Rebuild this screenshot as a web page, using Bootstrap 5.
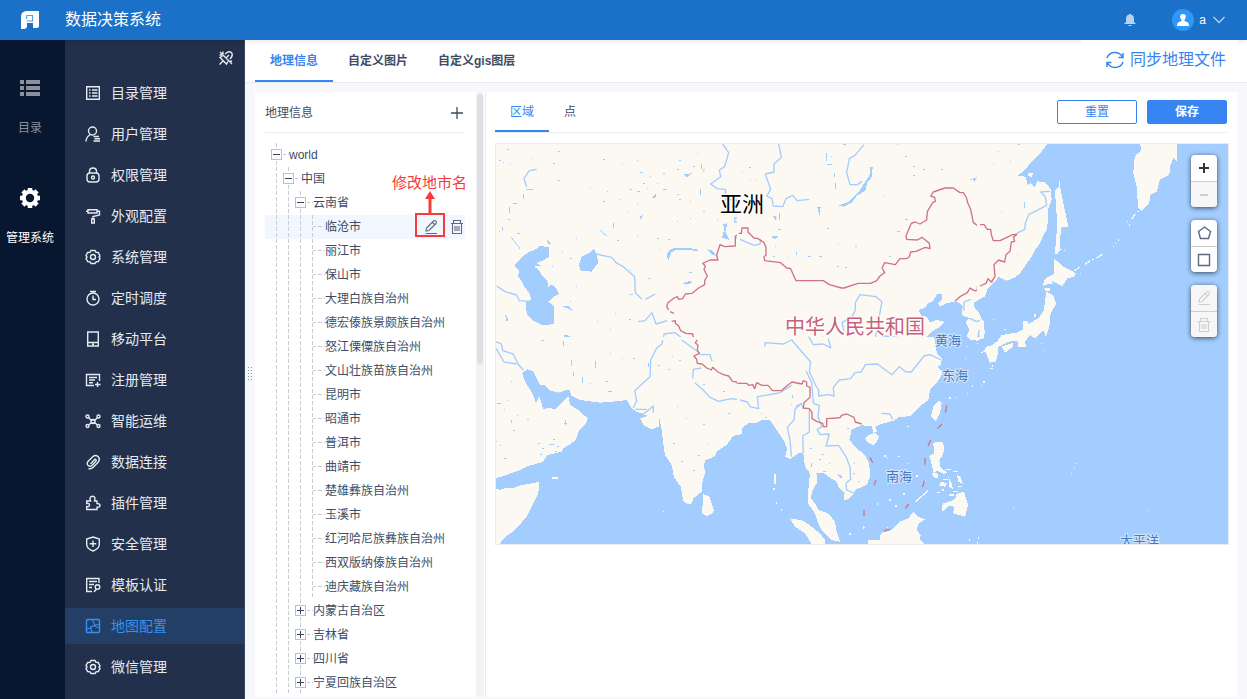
<!DOCTYPE html>
<html lang="zh-CN">
<head>
<meta charset="utf-8">
<meta name="viewport" content="width=device-width, initial-scale=1">
<title>数据决策系统</title>
<link href="https://cdn.jsdelivr.net/npm/bootstrap@5.3.0/dist/css/bootstrap.min.css" rel="stylesheet">
<script src="https://cdn.jsdelivr.net/npm/bootstrap@5.3.0/dist/js/bootstrap.bundle.min.js" defer></script>
<style>
:root { --ink:#3d4d66; --blue:#3685f2; --line:#e8eaed; }
body { font-family:"Liberation Sans","Noto Sans CJK SC",sans-serif; font-size:12px; line-height:18px; color:var(--ink); background:#f7f8fb; }
a { color:inherit; text-decoration:none; }
button { font-family:inherit; }
.icon-btn { border:0; background:none; padding:0; color:inherit; display:flex; align-items:center; justify-content:center; }
svg.ico { width:16px; height:16px; fill:none; stroke:currentColor; stroke-width:1.4; flex:none; display:block; }

.topbar { height:40px; background:#1a71c7; color:#fff; padding:0 22px 0 20px; z-index:1; box-shadow:0 1px 6px rgba(0,0,0,.1); flex:none; }
.topbar h1 { font-size:16px; line-height:24px; font-weight:400; margin:0 0 0 25px; }
.avatar { width:22px; height:22px; border-radius:50%; background:#2f96fa; margin:0 5px 0 36px; }
.user { gap:7px; }

.rail { width:65px; background:#081730; color:#fff; padding:38px 5px 0 0; flex:none; }
.rail a { display:flex; flex-direction:column; align-items:center; gap:21px; margin-bottom:51px; white-space:nowrap; }
.rail .dim { color:#8a909c; }

.side { width:180px; background:#22304c; border-right:1px solid #344663; color:#e6eaf1; flex:none; overflow:hidden; }
.side .pin { width:16px; height:16px; margin:10px 10px 9px auto; }
.side a { height:36px; margin-bottom:5px; padding-left:20px; gap:10px; font-size:14px; line-height:20px; }
.side a.active { background:#233f66; color:#3491f4; }

.tabbar { height:43px; background:#fff; border-bottom:1px solid var(--line); padding-left:10px; flex:none; }
.tab-a { padding:2px 15px 0; display:flex; align-items:center; border-bottom:2px solid transparent; }
.tab-a.active { color:var(--blue); border-color:var(--blue); }
.sync { height:42px; width:157px; margin:-1px 9px 0 auto; background:#fff; color:var(--blue); font-size:16px; gap:5px; position:relative; z-index:2; padding-left:12px; }

.work, .shell { min-height:0; }
.work { padding:9px 10px 2px 0; }
.grip { width:10px; display:flex; align-items:center; justify-content:center; margin-top:-44px; }
.grip svg { width:5px; height:14px; }
.tree-panel { width:231px; background:#fff; border-right:1px solid var(--line); flex:none; }
.tree-body { padding:0 11px 0 10px; min-width:0; overflow:hidden; }
.tree-head { height:41px; border-bottom:1px solid var(--line); margin-bottom:10px; padding:1px 1px 0 0; }
.tree-head svg { width:14px; height:14px; }
.bar-track { width:8px; margin-right:1px; background:#f2f2f2; border-radius:4px; padding:2px 1px; flex:none; }
.bar-thumb { height:45%; background:#dedfe4; border-radius:3px; }

.node { height:24px; padding-left:6px; display:flex; align-items:center; white-space:nowrap; position:relative; }
.node.chosen { background:#f2f7ff; z-index:1; }
.guide { width:12px; height:24px; flex:none; display:flex; align-items:center; padding-bottom:1px;
  background:repeating-linear-gradient(#c9ccd3 0 4px,transparent 4px 6px) 5px 0/1px 100% no-repeat; }
.dash, .guide.leaf::after { content:""; width:6px; height:1px; flex:none; background:repeating-linear-gradient(90deg,#c9ccd3 0 3px,transparent 3px 5px); }
.guide.leaf::after { margin-left:6px; }
.dash { margin-bottom:1px; }
.toggle { width:11px; height:11px; border:1px solid #b9bfcb; background:#fff; color:#33415c; padding:0; display:block; flex:none; }
.toggle svg { width:9px; height:9px; display:block; }
.acts { position:absolute; right:0; top:0; height:24px; gap:10px; color:#5d6a80; }
.acts svg { stroke-width:1.1; }
.callout { position:absolute; right:20px; top:-2px; width:30px; height:24px; border:2px solid #f43c3c; pointer-events:none; }
.callout svg { position:absolute; left:8px; top:-24px; width:10px; height:22px; }
.callout span { position:absolute; right:-24px; top:-42px; font-size:15px; line-height:20px; color:#f43c3c; }

.map-panel { background:#fff; padding:0 8px 0 9px; min-width:0; }
.map-head { height:41px; border-bottom:1px solid var(--line); margin:0 2px 10px 0; }
.map-btns { gap:10px; }
.map-head .btn { --bs-btn-padding-y:0; --bs-btn-padding-x:0; --bs-btn-font-size:12px; --bs-btn-line-height:16px; width:80px; height:24px; border-radius:2px;
  --bs-btn-color:#3685f2; --bs-btn-border-color:#3685f2; }
.map-head .btn-solid { --bs-btn-color:#fff; --bs-btn-bg:#3685f2; }
.map-box { border:1px solid var(--line); position:relative; }
.map-box > svg { display:block; width:100%; height:auto; background:#a3ccff; }
.tools { position:absolute; right:11px; top:11px; display:grid; gap:13px; }
.tool-set { width:26px; border-radius:4px; overflow:hidden; background:#fff; box-shadow:0 1px 5px rgba(0,0,0,.65); color:#5a6980; }
.tool-set button { width:26px; height:26px; }
.tool-set .dark { color:#333; }
.tool-set button + button { border-top:1px solid #ccc; }
.tool-set .off { background:#f6f6f6; color:#ccd0d6; }
.tool-set .off svg { stroke-width:1.1; }
.tool-set .bold { stroke-width:2; }
.land { fill:#fcf9f2; }
.water { fill:#a3ccff; }
.land, .water, .speck, .isle { shape-rendering:crispEdges; }
.river { fill:none; stroke:#a3ccff; stroke-width:4; stroke-linejoin:round; }
.speck { fill:none; stroke:#a3ccff; stroke-width:3; }
.isle { fill:none; stroke:#fcf9f2; stroke-width:4; }
.edge { fill:none; stroke:#cf7487; stroke-width:4; stroke-linejoin:round; }
.bigname { stroke:#fff; stroke-width:2px; paint-order:stroke; }
.seaname { font-size:13px; fill:#4179c4; stroke:#d5e6fb; stroke-width:2px; paint-order:stroke; }
</style>
</head>
<body>
<div class="d-flex flex-column vh-100 overflow-hidden">
  <header class="topbar d-flex align-items-center position-relative">
    <svg width="20" height="20" viewBox="0 0 20 20" aria-label="logo"><path fill="#fff" d="M6 1H19V16Q19 18 17 18H13V13H7V17Q6 19 4 19H1V6Q1 2 6 1Z"/><path d="M6.500 5.500H12.500V11.500M6.500 5.500V9M6.500 11H12.500" fill="none" stroke="#5d9fdf" stroke-width="1.200"/></svg>
    <h1>数据决策系统</h1>
    <button class="icon-btn ms-auto" aria-label="消息"><svg width="12" height="14" viewBox="0 0 12 14" fill="#b5d1ee"><path d="M5 1.500V1H7V1.500C9.500 2 10 4 10 6V9L12 11H0L2 9V6C2 4 2.500 2 5 1.500ZM4 12H8L7 13H5Z"/></svg></button>
    <span class="avatar d-flex align-items-center justify-content-center"><svg width="12" height="12" viewBox="0 0 12 12" fill="#fff"><path d="M6 0C10 0 9 4 7.500 6V7L11 8.500Q12 9 12 12H0Q0 9 1 8.500L4.500 7V6C3 4 2 0 6 0Z"/></svg></span>
    <button class="icon-btn user"><span>a</span><svg width="12" height="8" viewBox="0 0 12 8" fill="none" stroke="#b5d1ee" stroke-width="1.300"><path d="M.5 1L6 6.500L11.500 1"/></svg></button>
  </header>

  <div class="shell d-flex flex-grow-1">
    <nav class="rail">
      <a href="#" class="dim"><svg width="20" height="20" viewBox="0 0 20 20" fill="currentColor"><path d="M0 2h4v4H0zM6 2h14v4H6zM0 8h4v4H0zM6 8h14v4H6zM0 14h4v4H0zM6 14h14v4H6z"/></svg>目录</a>
      <a href="#"><svg width="20" height="20" viewBox="0 0 20 20"><circle cx="10" cy="10" r="6.200" fill="none" stroke="#fff" stroke-width="4"/><g stroke="#fff" stroke-width="4.500"><path d="M10 0V3M10 17V20M0 10H3M17 10H20M2.900 2.900L5 5M15 15L17.100 17.100M17.100 2.900L15 5M5 15L2.900 17.100"/></g></svg>管理系统</a>
    </nav>

    <nav class="side">
      <button class="icon-btn pin" aria-label="取消固定"><svg class="ico" viewBox="0 0 16 16"><path d="M2 2L14 14M7 4L9 2.500Q11 1 13.500 2.500Q15 5 13.500 7L12 9M4.500 6L2 7.500L8.500 14L10 11.500M5 11L1.500 14.500M5 1.500V4M1.500 5H4M11 5L8 8M12 11.500L14 11"/></svg></button>
      <a href="#" class="d-flex align-items-center"><svg class="ico" viewBox="0 0 16 16"><path d="M1.700 1.700H14.300V14.300H1.700ZM4 5H5.500M7 5H12.500M4 8H5.500M7 8H12.500M4 11H5.500M7 11H12.500"/></svg>目录管理</a>
      <a href="#" class="d-flex align-items-center"><svg class="ico" viewBox="0 0 16 16"><circle cx="7.500" cy="5" r="4"/><path d="M5.500 8.500Q1 11 1 15.500M8.500 10.500H14M9.500 12.700H15M8.500 15H15"/></svg>用户管理</a>
      <a href="#" class="d-flex align-items-center"><svg class="ico" viewBox="0 0 16 16"><rect x="2" y="6" width="12" height="9" rx="3"/><path d="M4.500 6V4.500Q4.500 1 8 1T11.500 4.500V6"/><circle cx="8" cy="10.500" r="1.500"/></svg>权限管理</a>
      <a href="#" class="d-flex align-items-center"><svg class="ico" viewBox="0 0 16 16"><path d="M3 1.700H12V5H3ZM1 3.300H3M12 3.300H14.500V7L8 8.500V11M6.700 11H9.300V15H6.700Z"/></svg>外观配置</a>
      <a href="#" class="d-flex align-items-center"><svg class="ico" viewBox="0 0 16 16"><path id="cog" d="M6 1.500H10L11 3.300L13.300 3.500L15 7L14 8L15 9.500L13.300 12.500L11 12.800L10 14.500H6L5 12.800L2.700 12.500L1 9.500L2 8L1 6.500L2.700 3.500L5 3.300Z"/><circle cx="8" cy="8" r="2.500"/></svg>系统管理</a>
      <a href="#" class="d-flex align-items-center"><svg class="ico" viewBox="0 0 16 16"><circle cx="8" cy="9" r="6"/><path d="M5 1.500H11M8 5.500V9.500H11M8 1.500V3"/></svg>定时调度</a>
      <a href="#" class="d-flex align-items-center"><svg class="ico" viewBox="0 0 16 16"><path d="M2.700 1H13.300V15H2.700ZM3 11.500H13M7 13.300H9"/></svg>移动平台</a>
      <a href="#" class="d-flex align-items-center"><svg class="ico" viewBox="0 0 16 16"><path d="M14.500 9V2.500H1.500V13.500H9M4 5.500H12M4 8H10M4 10.700H8M12.500 10V15M10 12.500H15.500"/></svg>注册管理</a>
      <a href="#" class="d-flex align-items-center"><svg class="ico" viewBox="0 0 16 16"><circle cx="2.500" cy="3.500" r="1.500"/><circle cx="13.500" cy="3.500" r="1.500"/><circle cx="2.500" cy="13" r="1.500"/><circle cx="13.500" cy="13" r="1.500"/><circle cx="8" cy="8.500" r="2"/><path d="M3.500 4.500L6 7H10L12.500 4.500M3.500 12L6 10H10L12.500 12"/></svg>智能运维</a>
      <a href="#" class="d-flex align-items-center"><svg class="ico" viewBox="0 0 16 16"><path d="M5.500 10L9.500 5.500Q10.500 5 11 5.700T10.800 7.200L7 11.500Q5 13 3 11.200Q1.500 9.500 3 7.500L8 2.500Q10.500 .5 13 2.500Q15.500 5 13.300 8L8.500 13Q6 15.500 3.500 14.500"/></svg>数据连接</a>
      <a href="#" class="d-flex align-items-center"><svg class="ico" viewBox="0 0 16 16"><path d="M1.700 14.500V11.500Q4.500 12 4.500 10T1.700 8.500V6H5.500Q4 1.300 7.500 1.300T9.500 6H12V8.500Q15 8.500 15 10.500T12 12.300V14.500Z"/></svg>插件管理</a>
      <a href="#" class="d-flex align-items-center"><svg class="ico" viewBox="0 0 16 16"><path d="M8 1L14.300 3V8.500Q14 13 8 15Q2 13 1.700 8.500V3ZM8 4.500V11M4.700 7.700H11.300"/></svg>安全管理</a>
      <a href="#" class="d-flex align-items-center"><svg class="ico" viewBox="0 0 16 16"><path d="M14 6V1.500H1.700V14.500H7M4 4.500H12M4 7.500H9M4 10.500H7M9 15L11.500 12"/><circle cx="12.500" cy="10" r="2.300"/></svg>模板认证</a>
      <a href="#" class="d-flex align-items-center active"><svg class="ico" viewBox="0 0 16 16"><rect x="1.500" y="1.500" width="13" height="13" rx="1"/><path d="M7.500 1.500L10 7.500L14.500 6M10 7.500L5.500 9V10L1.500 11M5.500 9L7 14.500M10 7.500L11 9L14.500 9.500" stroke-width="1.100"/></svg>地图配置</a>
      <a href="#" class="d-flex align-items-center"><svg class="ico" viewBox="0 0 16 16"><use href="#cog"/><circle cx="8" cy="8" r="2.500"/></svg>微信管理</a>
    </nav>

    <main class="d-flex flex-column flex-grow-1 overflow-hidden">
      <div class="tabbar d-flex fw-bold">
        <a href="#" class="tab-a active">地理信息</a>
        <a href="#" class="tab-a">自定义图片</a>
        <a href="#" class="tab-a">自定义gis图层</a>
        <button class="icon-btn sync"><svg width="20" height="18" viewBox="0 0 20 18" fill="none" stroke="currentColor" stroke-width="1.500"><path d="M2 7Q4 1.500 10 1.500Q15 1.500 17.500 6M18 2V6.500H13.500M18 11Q16 16.500 10 16.500Q5 16.500 2.500 12M2 16V11.500H6.500"/></svg>同步地理文件</button>
      </div>

      <div class="work d-flex flex-grow-1">
        <div class="grip"><svg viewBox="0 0 5 14" fill="#8f99aa"><path d="M0 1h1v1H0zM3 1h1v1H3zM0 4h1v1H0zM3 4h1v1H3zM0 7h1v1H0zM3 7h1v1H3zM0 10h1v1H0zM3 10h1v1H3zM0 13h1v1H0zM3 13h1v1H3z"/></svg></div>
        <section class="tree-panel d-flex">
          <div class="tree-body flex-grow-1">
            <div class="tree-head d-flex align-items-center justify-content-between"><span>地理信息</span><button class="icon-btn" aria-label="添加"><svg viewBox="0 0 14 14" fill="none" stroke="currentColor" stroke-width="1.300"><path d="M7 1V13M1 7H13"/></svg></button></div>
            <div id="tree"></div>
          </div>
          <div class="bar-track"><div class="bar-thumb"></div></div>
        </section>

        <section class="map-panel flex-grow-1">
          <div class="map-head d-flex">
            <a href="#" class="tab-a active">区域</a>
            <a href="#" class="tab-a">点</a>
            <div class="map-btns ms-auto d-flex align-items-center">
              <button class="btn">重置</button>
              <button class="btn btn-solid fw-bold">保存</button>
            </div>
          </div>
          <div class="map-box">
            <svg viewBox="496 144 732 400" role="img" aria-label="亚洲地图">
              <!-- north-west: Caspian, Aral, Kazakhstan -->
              <g transform="translate(490 140) scale(.33333)">
                <path class="land" d="M0 0H790V640H0Z"/>
                <path class="water" d="M178 322L150 318 140 326 122 334 105 343 95 352 82 366 73 378 88 393 84 408 95 425 102 438 115 455 125 478 108 485 110 520 118 532 135 545 160 556 193 552 193 500 175 485 192 470 208 462 195 440 186 434 175 440 172 422 155 405 146 390 133 380 153 377 140 370 165 358 178 350ZM275 350L300 338 312 326 318 340 325 368 305 395 272 392 267 374ZM530 348Q534 326 555 324L620 326 625 332 560 330 545 336 535 360ZM650 328L666 330 680 348 668 344ZM578 430L600 422 606 428 590 434ZM582 102L606 100 590 112ZM700 252L712 250 706 275 718 300 696 292 702 272ZM448 230L460 224 452 238ZM44 520L56 540 50 546ZM222 584L240 588 226 620 224 600ZM485 172L500 158 495 176ZM216 500L235 496 250 514 230 504ZM155 598L164 598 160 606ZM18 590L34 610 36 640H18ZM170 298L186 312 176 314Z"/>
                <path class="river" d="M318 342L365 352 378 368 400 380 434 410 436 458 456 478M20 438L45 455 80 465 88 482 115 484M466 478L496 462M444 545L465 542 486 518 498 552 532 542M498 630L520 608 522 582 555 578 620 628M698 12L716 38 704 80 688 90 692 110 662 132 682 146 706 148 708 178 740 180 742 210M752 230V246H734V234ZM738 292L780 312M140 88L118 92 102 116 110 140"/>
                <path class="speck" d="M108 150h22M100 162v16M82 190h-14M60 200v18M55 240h4M80 280h10M62 290l28 36M28 62h4M38 68h4M60 75h4M125 55h4M205 35h4M190 72h4M340 60h4M440 62h4M450 98h8M520 100h6M635 72v14M640 88h6M610 80h4M420 150h6M440 155h10M470 145h4M500 130h4M520 150h12M560 165h6M568 180h6M600 185h4M632 148v16M600 235h4M560 245h4M638 95h4M205 122h4M300 145h4M350 155h4M340 185h6M440 190h5M410 215h4M370 250v14M330 270l22 20M380 303h6M258 295h4M215 335h4M240 355h6M185 380h4M420 392h4M475 415h6M598 398h8M420 465h10M258 440h4M240 485h4M375 520h4M320 545h4M360 570h4M418 540h5M180 500h6M510 330h4M502 295h6M535 300h4M440 290h5M38 260v14M26 275h5M52 30h4M640 215h4M680 240h4M620 40h4M560 90h6M568 62h4M460 130h4M480 110h4M390 180h4M395 70h4"/>
                <path class="edge" d="M780 280H776V264H756V278L736 288V318L704 320 690 314 680 345 684 360 660 360 638 370 646 378 642 388 652 408 644 422V434L626 444 606 460 586 462 578 476 566 478 562 470 552 474 534 488 530 500 536 510M540 515L552 520M545 544L556 542V550L566 558 572 572 588 580 608 582 612 598 622 604 616 618 622 630"/>
              </g>
              <!-- north-east: Mongolia, Baikal, north China, Korea -->
              <g transform="translate(740 140) scale(.33333)">
                <path class="land" d="M-10 0H790V400L775 412 760 430 742 448 735 470 700 488 705 505 718 520 722 530 730 560 735 575 730 595 712 602 690 600 680 590 688 568 676 545 690 535 665 525 668 500 658 488 640 485 620 490 600 500 595 490 608 478 605 462 590 463 580 482 562 492 558 502 535 510 545 528 560 530 570 548 590 540 615 546 600 560 575 575 560 592 580 610 590 640H-10Z"/>
                <path class="water" d="M392 78L398 82 396 110 382 128 376 152 350 168 335 188 312 200 296 196 325 186 345 166 362 148 372 130 388 108ZM232 202L242 202 238 228ZM98 228L112 230 106 242ZM698 116L710 112 704 126ZM92 290L114 288 106 298Z"/>
                <path class="river" d="M116 12L124 52 102 72V96L76 102 92 148 80 168 96 176 100 198 128 200 138 176 158 166 172 182 208 178M372 14L345 46 328 56 320 98 330 134 352 134 366 124M0 298L42 316 60 312 62 298M405 600L426 485 408 470 360 464 346 488V510L336 530 306 548 312 575M250 590L272 624 250 622 220 602M405 600L434 588 484 594M180 594H150M75 620V608L130 612 155 600 180 630M692 478L672 486V512M690 535L710 545 722 540 724 585 714 590 718 570"/>
                <path class="speck" d="M260 40v24M262 75h14M285 100v12M288 130v16M310 15h8M272 50h5M496 238h8M472 276h8M5 98h4M28 82h4M45 120h4M120 220v20M115 268h8M105 320h4M170 336v8M98 350h8M140 352h4M205 350h8M236 350h10M262 265h4M294 312h4M346 320h4M448 350h4M292 380h4M316 382h4M428 168h4M496 50h4M520 80h4M550 88h5M604 90h4M470 15h5M765 28h4M748 124h4M520 108h4M690 120h5M30 120h4M102 10h4"/>
                <path class="edge" d="M-4 280H4L6 264H24V276L42 294 54 296 72 308 78 322 78 345 72 350 74 362 122 368 140 384 152 386 168 422H250L268 434 304 444 312 444 354 430H392L410 422 420 408 434 398 426 384 434 368 466 374 480 356H500L508 350 512 336 528 334 556 322 570 326 568 310 546 292 532 300 500 298 498 288 514 250 525 246 540 252 560 240 562 215 578 188 586 184 584 172 572 168 580 156 615 144 640 144 660 158 670 158 680 174 682 186 692 208 700 248 712 256H736L752 270 758 302H780L800 294 830 282"/>
                <path class="edge" d="M645 484L660 470 682 458 690 444 702 452 712 452 712 440 730 438 740 428 742 416 756 426 764 410 762 374 776 362 790 368"/>
              </g>
              <!-- Okhotsk, Sakhalin, Kamchatka, Japan -->
              <g transform="translate(980 140) scale(.33333)">
                <path class="land" d="M-10 0H210L200 14 185 35 168 52 150 70 135 90 112 108 138 110 142 135 152 130 165 142 172 124 195 126 213 148 215 180 205 205 204 240 200 270 190 285 180 310 165 330 155 350 140 370 120 400 105 412 80 422 55 410 35 430 20 440 15 470 -10 480ZM145 98L160 98 155 112 142 105ZM238 120L242 150 250 190 258 225 265 262 245 262 240 295 240 325 255 332 240 330 232 343 225 340 228 300 232 250 228 200 225 150 236 140ZM222 355L250 380 288 400 282 410 262 415 247 438 215 422 218 432 195 434 188 440 192 422 205 410 222 402ZM200 455L220 465 228 492 212 520 208 560 198 590 190 572 165 595 150 585 135 605 138 620 115 622 112 602 85 605 65 615 40 630 0 640 50 605 65 585 110 578 130 568 128 542 142 542 145 552 175 535 192 510 195 480ZM192 444H210V452H195ZM480 12H590V65L580 55 570 80 568 105 540 118 530 155 510 165 508 190 485 212 475 205 472 170 470 140 460 100 462 60 468 45 484 30ZM0 530L12 545 12 585 0 590Z"/>
                <path class="isle" d="M455 236l12-14M440 245h3M446 255h3M415 300h3M405 310h3M398 320h3M368 342l-18 12M342 358h-6M330 362l-16 12M300 382l-18 10M300 400h4M38 538h4M72 568h6M184 610h3M165 522v8M472 215h4"/>
                <path class="river" d="M110 280L134 268 136 250 146 224 200 196 196 170 182 156 210 154M120 275L100 285"/>
                <path class="edge" d="M0 254H12L22 268H32L34 284 40 302 60 302 98 284 110 284 100 292 104 304 94 306 90 334 78 344 74 366 56 360 42 374 45 410 34 426 24 416 18 430 0 438"/>
                <path class="speck" d="M38 70h3M90 65h3M62 216h3M135 185v18M115 14h4M112 345h3M55 35h3"/>
              </g>
              <!-- south-west: Persian Gulf, Arabia, India -->
              <g transform="translate(490 340) scale(.33333)">
                <path class="land" d="M0 -10H790V245L775 250 758 262 755 282 730 288 710 315 680 335 675 348 645 362 642 375 645 400 636 430 635 455 610 475 605 490 592 492 580 484 572 440 552 412 545 375 525 345 520 310 515 270 508 235 506 260 485 268 460 255 450 235 475 228 440 215 425 205 410 180 380 184 330 188 270 180 245 168 238 148 205 158 180 152 165 136 150 134 130 95 112 87 97 100 105 125 130 165 138 190 148 168 160 208 175 203 195 208 235 168 240 195 265 210 293 235 288 250 268 270 258 300 235 316 220 325 215 335 170 346 160 365 110 380 90 390 30 412 0 415ZM0 438L30 450 45 444 75 443 90 436 148 426 145 460 125 500 110 530 75 570 45 592 28 612H0ZM640 462L658 470 672 510 668 520 650 528 636 520ZM186 411H203V416H186Z"/>
                <path class="river" d="M18 5L34 12 38 32 70 42 84 72 100 90M18 25L42 66 80 72M518 0L516 12 500 24 482 60 480 110 434 152 440 182 430 204M436 208H470M450 230L475 210 490 198V218M575 0L630 40M614 128L640 150 660 172 686 184 724 176 768 182 780 200M608 116L610 88 634 84M630 44H660L666 64"/>
                <path class="speck" d="M152 2h10M222 4v14M245 60v18M318 64v20M250 95v12M278 112v16M345 126h10M355 155h12M430 55h5M228 240v16M222 250h10M145 312h6M178 314h14M200 320h6M155 325h6M190 300h4M66 240v8M42 210h4M50 182h4M22 192h10M70 272h4M18 305h4M30 318h4M42 355h8M80 226h4M150 345h5M195 335h5M475 70v10M485 105h5M505 78h4M568 62h4M560 200h4M588 235h4M550 312h5M574 366h4M625 348h4M650 312h5M715 220h5M700 155h5M640 135h5M62 125h5M112 238h4M396 55h4M360 40h4M545 50h5M535 88h5M610 392h4M640 255h4M300 130h4"/>
                <path class="edge" d="M622 0L616 8 624 16 622 30 628 40 612 48 620 58 622 70 636 72 650 84 664 90 668 82 684 96 700 104 716 108 728 124 740 126 744 134 760 132 790 134"/>
                <path class="isle" d="M518 514h3"/>
              </g>
              <!-- south-east: Indochina, south China, Philippines -->
              <g transform="translate(740 340) scale(.33333)">
                <path class="land" d="M-10 -10H582L588 20 590 38 605 55 604 75 592 80 605 92 605 105 590 130 570 150 565 180 545 195 530 210 510 228 475 232 460 242 415 255 405 262 412 275 400 278 396 258 365 256 335 268 328 300 350 325 375 345 388 372 390 410 380 435 345 450 342 462 318 482 312 478 314 458 295 440 290 425 268 412 250 398 232 398 230 430 218 450 212 475 225 490 235 510 265 520 285 545 290 575 300 605 275 600 245 572 235 550 225 520 205 492 205 450 210 400 195 380 190 340 175 340 150 357 135 350 142 325 130 300 110 270 90 240 65 240 45 250 25 248 8 255 -10 275ZM385 285L405 278 418 290 412 302 400 315 380 305 376 295ZM598 182L605 190 600 218 588 245 573 228 580 200ZM580 308L608 305 613 325 608 345 598 360 602 382 622 398 612 402 590 392 582 400 574 370 568 348 582 340ZM575 400H592L596 415 582 412ZM650 405L662 410 668 432 655 425ZM600 425L622 430 615 440 598 438ZM625 410L635 430 640 450 628 440ZM610 490L645 478 650 462 672 455 684 495 675 530 640 520 642 500 625 497 608 515 605 500ZM385 612V600L420 600 422 580 455 570 480 545 505 535 520 515 535 530 555 538 535 552 530 570 542 585 540 600 552 612ZM150 535L190 542 215 560 240 580 255 600V612H215L195 580 165 560ZM736 20L762 18 775 35 768 65 755 68 745 42Z"/>
                <path class="water" d="M292 402L308 408 302 416Z"/>
                <path class="river" d="M75 20V8L130 12 155 0 212 66 208 95 228 138 236 150V168L264 164 282 168 280 142 298 120 332 116 345 98 364 96 376 74 412 72 456 104 478 80 498 96H514L552 48 570 44 604 60M198 92L215 128 220 190 238 196 234 230 246 260 232 268 240 284 268 282 258 318 296 316 318 350 330 380 332 418 318 430 320 450 344 460M168 200L184 190 190 206M0 180L22 186 30 200 56 206 52 170 100 162 120 158 155 136M184 190L165 208 162 240 142 262 150 300 154 350M208 210V276L188 288 190 340M206 -10L220 14 250 12 272 24 265 -5M424 220L450 222 458 238"/>
                <path class="speck" d="M158 165v8M152 195h4M75 232h6M322 265h5M260 245h4M62 220h5M210 325h5M246 345h6M214 370v12M250 395h8M238 360h4M340 400h5M355 425h4M228 402h5M266 370h4M342 372h4"/>
                <path class="edge" d="M-8 130H20L26 136 38 134 44 146 50 128 66 136 84 136 98 152H124L140 138 156 126 186 132 190 122 200 126V138L210 142V172L192 188 190 204 208 206 216 218V236L230 244 248 250 250 260H260L260 236 290 234 302 232 304 226 320 222 342 232 346 246 365 252"/>
                <path class="edge" d="M620 196L616 218M606 252L592 266M572 300L564 318M555 354V374M554 422L547 442M506 492L496 506M450 568L432 572M372 510V528M408 420L402 436M390 352L398 368"/>
                <path class="isle" d="M525 486L565 452M628 174h6M648 172h4M502 260h6M475 350h5M432 348h6M440 352h5M500 370h4M528 408h5M448 480h6M466 498h5M490 462h6M410 492h4M556 424h3M370 558v8M368 562h8M105 402v30M102 445v6M110 485v6M124 508v5M330 578v6M440 562h5M590 458h10M618 388h14M640 395h14M610 418h14M605 450h8M640 455h14M655 440h12M628 465h14M675 55h4M696 138h3M732 124h3M680 20h5M710 10h4M715 590v8M712 605v8M686 600h3M680 160h4"/>
              </g>
              <!-- Kyushu, Shikoku, Pacific islets -->
              <g transform="translate(980 340) scale(.33333)">
                <path class="land" d="M16 25L35 15 55 20 50 45 45 65 30 68 20 45ZM38 10L80 0 90 0 60 12ZM65 20L100 8 100 20 75 38ZM110 0H140L120 20Z"/>
                <path class="isle" d="M30 85h9M38 76v5M10 126h4M3 136h3M184 10h3M190 31h2M289 370h3M282 385h3M273 400h3M99 502h3M501 511h3"/>
              </g>
              <text class="bigname" x="720" y="212" font-size="22" fill="#000">亚洲</text>
              <text class="bigname" x="785" y="334" font-size="20" fill="#c4607a">中华人民共和国</text>
              <g class="seaname"><text x="935" y="345">黄海</text><text x="942" y="380">东海</text><text x="886" y="481">南海</text><text x="1120" y="545">太平洋</text></g>
            </svg>
            <div class="tools">
              <div class="tool-set">
                <button class="icon-btn dark" aria-label="放大"><svg class="ico bold" viewBox="0 0 16 16"><path d="M8 3V13M3 8H13"/></svg></button>
                <button class="icon-btn off" aria-label="缩小" disabled><svg class="ico" viewBox="0 0 16 16"><path d="M4 8H12" stroke-width="2"/></svg></button>
              </div>
              <div class="tool-set">
                <button class="icon-btn" aria-label="多边形"><svg class="ico" viewBox="0 0 16 16"><path d="M8.500 2L14.500 6.500L12.500 13.500H4.500L2.500 6.500Z"/></svg></button>
                <button class="icon-btn" aria-label="矩形"><svg class="ico" viewBox="0 0 16 16"><path d="M2.500 2.500H13.500V13.500H2.500Z"/></svg></button>
              </div>
              <div class="tool-set">
                <button class="icon-btn off" aria-label="编辑" disabled><svg class="ico" viewBox="0 0 16 16"><path id="pen" d="M3 12L3.500 9L10.500 2Q12 1 13 2.200T13 4.500L6 11.500ZM9.500 3.500L11.500 5.500M2.500 14.500H14"/></svg></button>
                <button class="icon-btn off" aria-label="删除" disabled><svg class="ico" viewBox="0 0 16 16"><path id="bin" d="M2 4.500H14M4.500 4V1.500H11.500V4M3.500 4.500V14.500H12.500V4.500M6 7V12M8 7V12M10 7V12"/></svg></button>
              </div>
            </div>
          </div>
        </section>
      </div>
    </main>
  </div>
</div>
<script>
// [depth, label, state]: "-" open, "+" closed, "" leaf
const nodes = [[0,"world","-"],[1,"中国","-"],[2,"云南省","-"],
  ...["临沧市","丽江市","保山市","大理白族自治州","德宏傣族景颇族自治州","怒江傈僳族自治州","文山壮族苗族自治州","昆明市","昭通市","普洱市","曲靖市","楚雄彝族自治州","玉溪市","红河哈尼族彝族自治州","西双版纳傣族自治州","迪庆藏族自治州"].map(n => [3,n,""]),
  [2,"内蒙古自治区","+"],[2,"吉林省","+"],[2,"四川省","+"],[2,"宁夏回族自治区","+"]];
const glyph = s => `<svg viewBox="0 0 9 9" stroke="currentColor"><path d="M1 4.500H8${s === "+" ? "M4.500 1V8" : ""}"/></svg>`;
const extras = `<span class="acts d-flex align-items-center"><button class="icon-btn" aria-label="重命名"><svg class="ico" viewBox="0 0 16 16"><use href="#pen"/></svg></button><button class="icon-btn" aria-label="删除节点"><svg class="ico" viewBox="0 0 16 16"><use href="#bin"/></svg></button></span>
<div class="callout"><svg viewBox="0 0 10 22" fill="#f43c3c"><path d="M5 0L10 8H6.500V22H3.500V8H0Z"/></svg><span class="text-nowrap">修改地市名</span></div>`;
document.getElementById("tree").innerHTML = nodes.map(([d, name, s]) => {
  const chosen = name === "临沧市";
  return `<div class="node${chosen ? " chosen" : ""}">` + '<span class="guide"></span>'.repeat(d) +
    (s ? `<span class="guide"><button class="toggle" aria-label="${name}">${glyph(s)}</button></span>` : '<span class="guide leaf"></span>') +
    `<span class="dash"></span><span>${name}</span>${chosen ? extras : ""}</div>`;
}).join("");
</script>
</body>
</html>
